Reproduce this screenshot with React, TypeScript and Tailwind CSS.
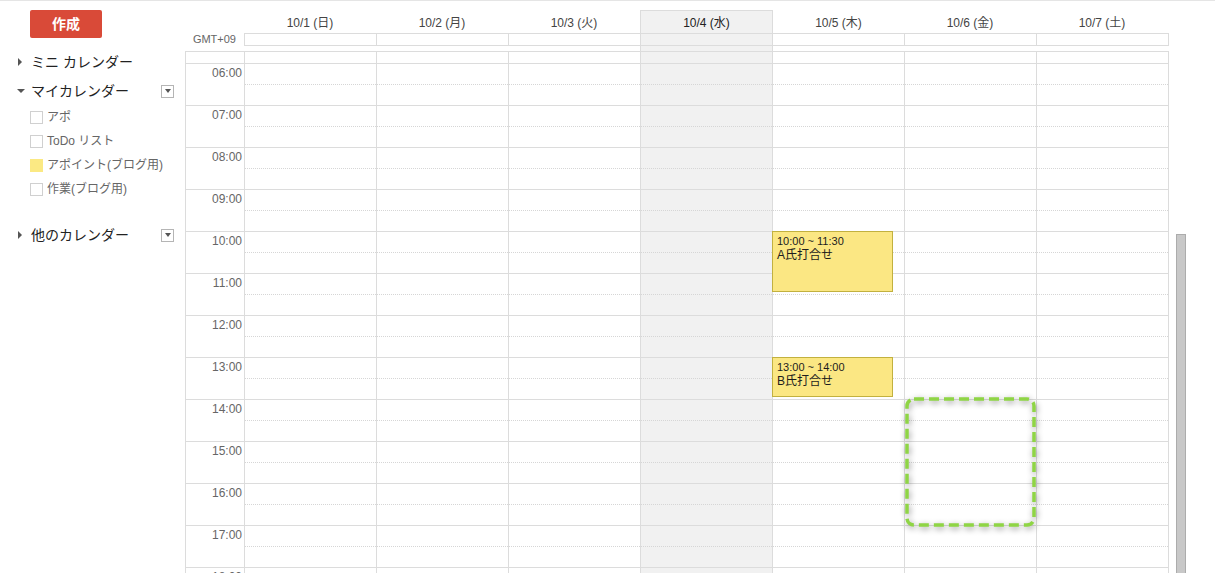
// Week view of a calendar: sidebar with calendar list, 7-day grid with two
// appointments and a dashed highlight over an empty slot on Friday.

const DAYS = ['10/1 (日)', '10/2 (月)', '10/3 (火)', '10/4 (水)', '10/5 (木)', '10/6 (金)', '10/7 (土)']
const TODAY = 3
const HOURS = ['06:00', '07:00', '08:00', '09:00', '10:00', '11:00', '12:00', '13:00', '14:00', '15:00', '16:00', '17:00', '18:00']

const CALENDARS = [
  { name: 'アポ', color: '' },
  { name: 'ToDo リスト', color: '' },
  { name: 'アポイント(ブログ用)', color: 'yellow' },
  { name: '作業(ブログ用)', color: '' },
]

function TriRight() {
  return <span className="block w-0 h-0 border-y-[4px] border-y-transparent border-l-[4px] border-l-[#555]" />
}

function TriDown() {
  return <span className="block w-0 h-0 border-x-[4px] border-x-transparent border-t-[4px] border-t-[#555]" />
}

function MenuBox() {
  return (
    <div className="ml-auto mr-[11px] flex h-[13px] w-[13px] items-center justify-center border border-[#b5b5b5] bg-white">
      <span className="block w-0 h-0 border-x-[3px] border-x-transparent border-t-[4px] border-t-[#555]" />
    </div>
  )
}

function Sidebar() {
  return (
    <div className="flex w-[185px] shrink-0 flex-col">
      <button className="ml-[30px] mt-[9px] flex h-[28px] w-[72px] items-center justify-center rounded-[2px] bg-[#d94a38] text-[14px] font-bold text-white">
        作成
      </button>

      <div className="mt-[14px] flex h-[20px] items-center pl-[18px] text-[14px] text-[#222]">
        <span className="flex w-[13px]"><TriRight /></span>
        ミニ カレンダー
      </div>

      <div className="mt-[9px] flex h-[20px] items-center pl-[17px] text-[14px] text-[#222]">
        <span className="flex w-[14px]"><TriDown /></span>
        マイカレンダー
        <MenuBox />
      </div>

      <div className="mt-[4px] flex flex-col">
        {CALENDARS.map((c) => (
          <div key={c.name} className="flex h-[24px] items-center pl-[30px] text-[12px] text-[#666]">
            <span
              className={
                c.color
                  ? 'mr-[4px] h-[13px] w-[13px] border border-[#fbe983] bg-[#fbe983]'
                  : 'mr-[4px] h-[13px] w-[13px] border border-[#d0d0d0] bg-white'
              }
            />
            {c.name}
          </div>
        ))}
      </div>

      <div className="mt-[24px] flex h-[20px] items-center pl-[18px] text-[14px] text-[#222]">
        <span className="flex w-[13px]"><TriRight /></span>
        他のカレンダー
        <MenuBox />
      </div>
    </div>
  )
}

function dayCell(i: number) {
  const last = i === 6 ? ' w-[133px] border-r' : ' w-[132px]'
  const bg = i === TODAY ? ' bg-[#f1f1f1]' : ''
  return 'shrink-0 border-l border-[#dcdcdc]' + last + bg
}

function Header() {
  return (
    <div className="flex flex-col">
      {/* date labels */}
      <div className="mt-[9px] flex h-[23px]">
        <div className="w-[59px] shrink-0" />
        {DAYS.map((d, i) => (
          <div
            key={d}
            className={
              i === TODAY
                ? 'flex w-[132px] shrink-0 items-center justify-center border-l border-t border-[#dcdcdc] bg-[#f1f1f1] pt-[1px] text-[12px] text-[#222]'
                : i === TODAY + 1
                  ? 'flex w-[132px] shrink-0 items-center justify-center border-l border-[#dcdcdc] pt-[2px] text-[12px] text-[#444]'
                  : 'flex w-[132px] shrink-0 items-center justify-center pt-[2px] text-[12px] text-[#444]'
            }
          >
            {d}
          </div>
        ))}
      </div>

      {/* all-day row */}
      <div className="flex h-[13px]">
        <div className="w-[59px] shrink-0 pr-[8px] text-right text-[11px] leading-[13px] text-[#666]">GMT+09</div>
        {DAYS.map((d, i) => (
          <div key={d} className={dayCell(i) + ' border-y'} />
        ))}
      </div>

      {/* spacer */}
      <div className="flex h-[5px]">
        <div className="w-[59px] shrink-0" />
        {DAYS.map((d, i) => (
          <div
            key={d}
            className={
              i === TODAY
                ? 'w-[132px] shrink-0 border-l border-[#dcdcdc] bg-[#f1f1f1]'
                : i === TODAY + 1
                  ? 'w-[132px] shrink-0 border-l border-[#dcdcdc]'
                  : 'w-[132px] shrink-0'
            }
          />
        ))}
      </div>
    </div>
  )
}

function Row({ label, partial }: { label?: string; partial?: boolean }) {
  return (
    <div className={partial ? 'flex h-[12px] border-t border-[#dcdcdc]' : 'flex h-[42px] border-t border-[#dcdcdc]'}>
      <div className="w-[59px] shrink-0 border-l border-[#dcdcdc] pr-[2px] pt-[2px] text-right text-[12px] leading-[14px] text-[#666]">
        {label}
      </div>
      {DAYS.map((d, i) => (
        <div key={d} className={dayCell(i)}>
          {!partial && <div className="h-[21px] border-b border-dotted border-[#d6d6d6]" />}
        </div>
      ))}
    </div>
  )
}

function Event({ top, height, time, title }: { top: string; height: string; time: string; title: string }) {
  return (
    <div
      className={
        'absolute left-[587px] w-[121px] border border-[#c2b13f] bg-[#fbe783] pl-[4px] pt-[3px] text-[#1d1d1d] ' + top + ' ' + height
      }
    >
      <div className="text-[11px] leading-[13px]">{time}</div>
      <div className="text-[12px] leading-[15px]">{title}</div>
    </div>
  )
}

function Body() {
  return (
    <div className="flex">
      <div className="relative w-[984px] shrink-0">
        <Row partial />
        {HOURS.map((h) => (
          <Row key={h} label={h} />
        ))}

        <Event top="top-[180px]" height="h-[61px]" time="10:00 ~ 11:30" title="A氏打合せ" />
        <Event top="top-[306px]" height="h-[40px]" time="13:00 ~ 14:00" title="B氏打合せ" />

        {/* dashed highlight over the free slot */}
        <svg
          className="absolute left-[719px] top-[345px] drop-shadow-[1px_2px_3px_rgba(0,0,0,0.45)]"
          width="133"
          height="132"
          viewBox="0 0 133 132"
          fill="none"
        >
          <rect x="3" y="3" width="127" height="126" rx="7" stroke="#8fd545" strokeWidth="3.5" strokeDasharray="10 5" />
        </svg>
      </div>

      {/* scrollbar */}
      <div className="ml-[7px] mt-[183px] h-[400px] w-[10px] border border-[#acacac] bg-[#c8c8c8]" />
    </div>
  )
}

export default function App() {
  return (
    <div className="flex h-[573px] w-[1215px] overflow-hidden border-t border-[#e5e5e5] bg-white font-['Liberation_Sans','Noto_Sans_CJK_JP',sans-serif]">
      <Sidebar />
      <div className="flex flex-col">
        <Header />
        <Body />
      </div>
    </div>
  )
}
